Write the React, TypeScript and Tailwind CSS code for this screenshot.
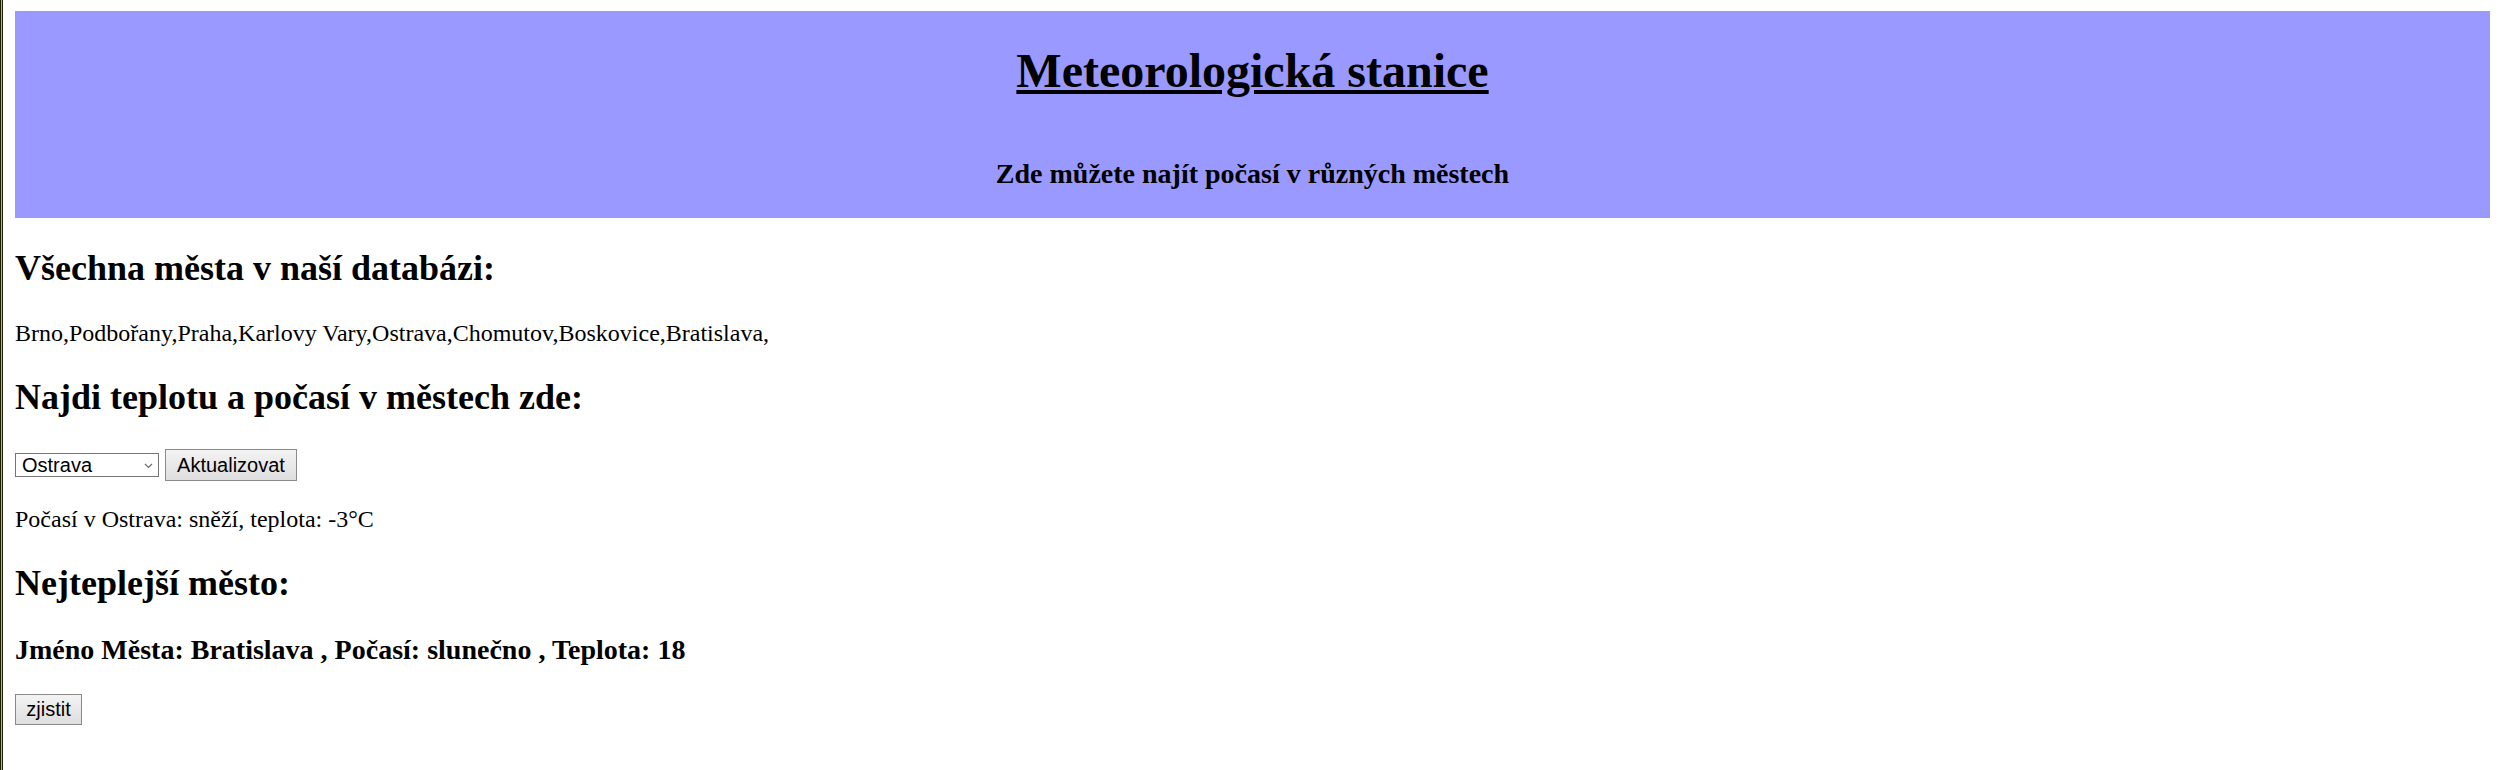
import React from "react";

function Chevron() {
  return (
    <svg width="9" height="6" viewBox="0 0 9 6" className="pointer-events-none absolute right-[6px] top-[10px]">
      <path d="M1 1 L4.5 4.5 L8 1" fill="none" stroke="#6d6d6d" strokeWidth="1.2" />
    </svg>
  );
}

export default function App() {
  const btn =
    "flex items-center justify-center border border-[#8a8a8a] bg-[linear-gradient(#f3f3f3,#dedede)] px-[9px] font-['Liberation_Sans',Arial,sans-serif] text-[20px] leading-[23px] text-black";
  return (
    <div className="flex min-h-[770px] bg-white font-['Liberation_Serif','Times_New_Roman',serif] text-black">
      <div className="w-[3px] shrink-0 bg-[linear-gradient(to_right,#1e1e00_0px,#1e1e00_1px,#c8c800_1px,#c8c800_2px,#1e1e00_2px)]" />
      <div className="flex flex-1 flex-col items-start pl-[12px] pr-[10px] pt-[11px]">
        <header className="flex w-full flex-col items-center bg-[#9999ff]">
          <h1 className="mt-[32px] mb-[32px] text-[48px] font-bold leading-[55px] underline">
            Meteorologická stanice
          </h1>
          <h3 className="mt-[28px] mb-[28px] text-[28px] font-bold leading-[32px]">
            Zde můžete najít počasí v různých městech
          </h3>
        </header>

        <h2 className="mt-[30px] text-[36px] font-bold leading-[41px]">Všechna města v naší databázi:</h2>
        <p className="mt-[30px] text-[24px] leading-[28px]">
          Brno,Podbořany,Praha,Karlovy Vary,Ostrava,Chomutov,Boskovice,Bratislava,
        </p>

        <h2 className="mt-[30px] text-[36px] font-bold leading-[41px]">Najdi teplotu a počasí v městech zde:</h2>
        <div className="mt-[31px] flex h-[32px] items-center gap-[6px]">
          <div className="relative h-[24px] w-[144px]">
            <select
              defaultValue="Ostrava"
              className="h-[24px] w-[144px] appearance-none border border-[#767676] bg-white pl-[6px] font-['Liberation_Sans',Arial,sans-serif] text-[20px] leading-[22px] text-black outline-none"
            >
              <option>Brno</option>
              <option>Podbořany</option>
              <option>Praha</option>
              <option>Karlovy Vary</option>
              <option>Ostrava</option>
              <option>Chomutov</option>
              <option>Boskovice</option>
              <option>Bratislava</option>
            </select>
            <Chevron />
          </div>
          <button className={btn + " h-[32px] w-[132px]"}>Aktualizovat</button>
        </div>
        <p className="mt-[24px] text-[24px] leading-[28px]">Počasí v Ostrava: sněží, teplota: -3°C</p>

        <h2 className="mt-[30px] text-[36px] font-bold leading-[41px]">Nejteplejší město:</h2>
        <h3 className="mt-[30px] text-[28px] font-bold leading-[32px]">
          Jméno Města: Bratislava , Počasí: slunečno , Teplota: 18
        </h3>
        <button className={btn + " mt-[28px] h-[31px] w-[67px]"}>zjistit</button>
      </div>
    </div>
  );
}
